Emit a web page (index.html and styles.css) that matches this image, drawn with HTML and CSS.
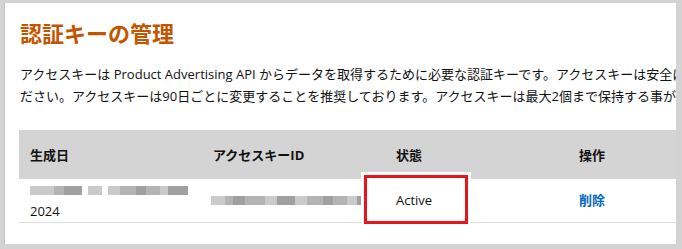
FILE: index.html
```html
<!DOCTYPE html>
<html lang="ja">
<head>
    <meta charset="UTF-8">
    <meta name="viewport" content="width=device-width, initial-scale=1.0">
    <title>認証キーの管理</title>
    <link rel="stylesheet" href="styles.css">
</head>
<body>
    <div class="panel">
        <h1>認証キーの管理</h1>
        <p class="intro">アクセスキーは Product Advertising API からデータを取得するために必要な認証キーです。アクセスキーは安全に保管してく<br>ださい。アクセスキーは90日ごとに変更することを推奨しております。アクセスキーは最大2個まで保持する事ができます。</p>

        <table class="keys">
            <thead>
                <tr>
                    <th>生成日</th>
                    <th>アクセスキーID</th>
                    <th>状態</th>
                    <th>操作</th>
                </tr>
            </thead>
            <tbody>
                <tr>
                    <td>
                        <div class="mosaic date">
                            <i style="width:24px"></i><i style="width:10px"></i><i style="width:18px"></i><i class="gap"></i><i style="width:14px"></i><i class="gap"></i><i style="width:12px"></i><i style="width:16px"></i><i style="width:10px"></i><i style="width:14px"></i><i style="width:8px"></i><i style="width:20px"></i>
                        </div>
                        <div>2024</div>
                    </td>
                    <td>
                        <div class="mosaic key">
                            <i style="width:14px"></i><i style="width:8px"></i><i style="width:12px"></i><i style="width:20px"></i><i style="width:12px"></i><i style="width:18px"></i><i style="width:12px"></i><i style="width:16px"></i><i style="width:10px"></i><i style="width:14px"></i><i style="width:10px"></i><i style="width:16px"></i>
                        </div>
                    </td>
                    <td class="status">
                        <span class="highlight"></span>
                        <span class="status-text">Active</span>
                    </td>
                    <td><a href="#" class="delete">削除</a></td>
                </tr>
            </tbody>
        </table>
    </div>
</body>
</html>
```

FILE: styles.css
```css
body {
    margin: 0;
    background-color: #d3d3d3;
    font-family: 'Open Sans', 'Noto Sans CJK JP', sans-serif;
    color: #111;
}

.panel {
    margin: 3px 6px 5px 4px;
    height: 241px;
    box-sizing: border-box;
    padding: 14px 0 0 15px;
    background-color: #fff;
    border-left: 1px solid #c4c4c4;
    overflow: hidden;
}

h1 {
    margin: 0;
    font-size: 22px;
    line-height: 32px;
    font-weight: bold;
    color: #c45500;
    white-space: nowrap;
}

.intro {
    margin: 14px 0 23px;
    font-size: 13px;
    line-height: 22px;
    color: #111;
    white-space: nowrap;
}

.keys {
    width: 732px;
    table-layout: fixed;
    border-collapse: collapse;
    margin-left: -1px;
}

.keys th {
    width: 183px;
    height: 49px;
    box-sizing: border-box;
    padding: 0 0 0 11px;
    background-color: #d4d4d4;
    text-align: left;
    font-size: 13px;
    font-weight: bold;
    color: #111;
}

.keys td {
    height: 43px;
    padding: 0 0 0 11px;
    font-size: 13px;
    line-height: 21px;
    border-bottom: 1px solid #dcdcdc;
    vertical-align: middle;
}

.mosaic {
    display: flex;
    height: 21px;
    align-items: center;
    filter: blur(0.7px);
}

.mosaic i {
    display: block;
    height: 9px;
    background-color: #b4b4b4;
}

.mosaic i:nth-child(odd) {
    background-color: #cacaca;
}

.mosaic i:nth-child(3n) {
    background-color: #a0a0a0;
}

.mosaic .gap {
    width: 6px;
    background-color: transparent !important;
}

.mosaic.key {
    margin-left: -2px;
}

.status {
    position: relative;
}

.highlight {
    position: absolute;
    left: -21px;
    top: -4px;
    width: 98px;
    height: 43px;
    border: 3px solid #e8141c;
    background-color: #fff;
    box-shadow: 0 0 0 3px #fff;
}

.status-text {
    position: relative;
}

.delete {
    color: #0066c0;
    font-weight: bold;
    text-decoration: none;
}
```
